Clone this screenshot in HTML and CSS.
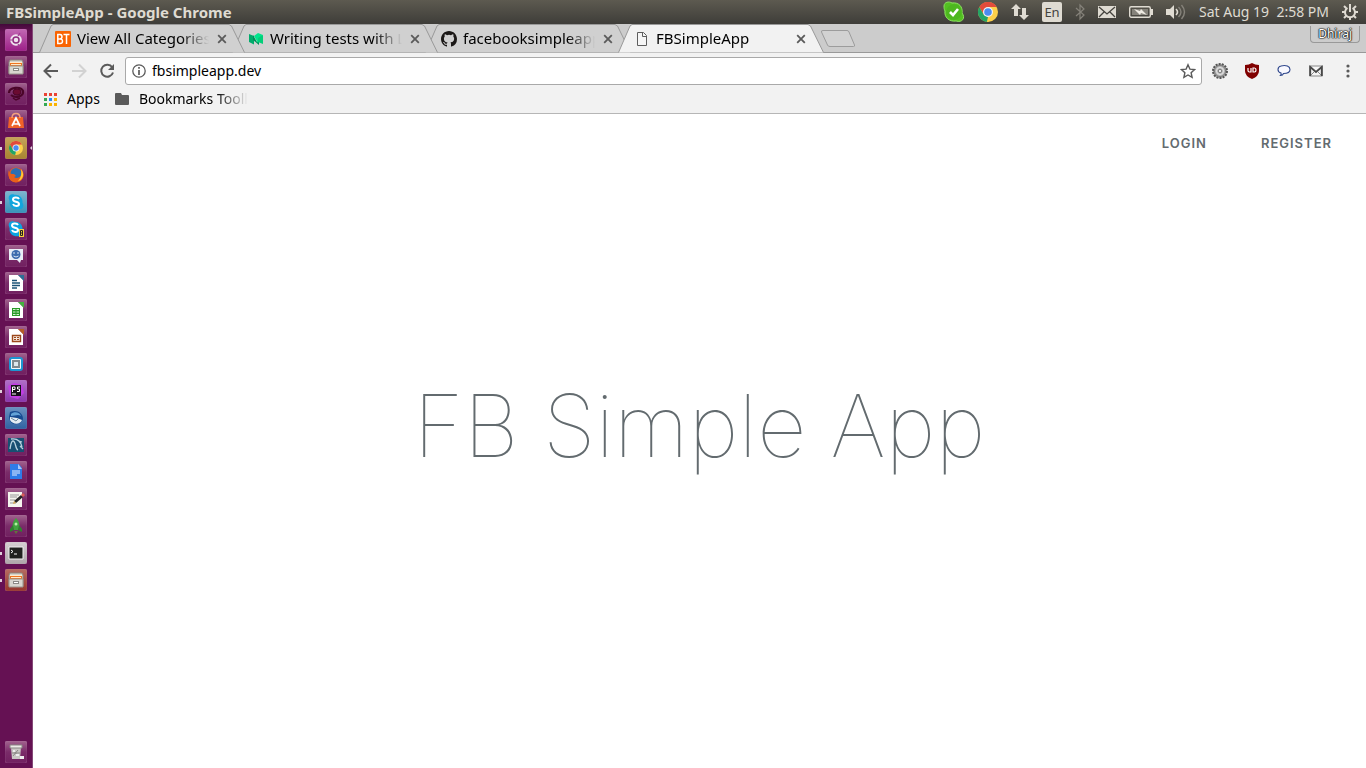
FILE: index.html
```html
<!DOCTYPE html>
<html lang="en">
<head>
<meta charset="utf-8">
<title>FBSimpleApp - Google Chrome</title>
<link rel="stylesheet" href="styles.css">
</head>
<body class="desktop">
<svg class="defs" aria-hidden="true">
  <defs>
    <symbol id="chrome" viewBox="0 0 20 20">
      <circle cx="10" cy="10" r="10" fill="#fdd04a"/>
      <path d="M10 10 5.7 12.5 1.3 5A10 10 0 0 1 18.7 5H10Z" fill="#e24b3c"/>
      <path d="M1.3 5 5.7 12.5 10 15 9.6 20A10 10 0 0 1 1.3 5Z" fill="#23a566"/>
      <path d="M10 15 14.3 12.5 10 20H9Z" fill="#fdd04a"/>
      <circle cx="10" cy="10" r="5" fill="#f4f4f4"/><circle cx="10" cy="10" r="3.8" fill="#4b8bf0"/>
    </symbol>
    <symbol id="close" viewBox="0 0 10 10"><path d="M1.2 1.2 8.8 8.8M8.8 1.2 1.2 8.8" stroke="#5a5a5a" stroke-width="1.8"/></symbol>
    <symbol id="cabinet" viewBox="0 0 22 22">
      <path d="M5 4h12l1 2v11H4V6Z" fill="#d5d2ca" stroke="#8c857c"/><path d="M5 6h12v4H5z" fill="#ef7420"/><path d="M5 6h12v1H5zM6 8h10v1H6z" fill="#ffe9c9"/>
      <path d="M4 10h14v8H4z" fill="#d8d6cf" stroke="#99948c"/><path d="M8 12h6v3H8z" fill="#8b8985"/><path d="M9 13h4v1H9z" fill="#fff"/>
    </symbol>
    <symbol id="skypeball" viewBox="0 0 20 20"><path d="M1 6C0 2 4-1 8 1c6-1 11 4 10 10 3 4 0 9-5 8C6 20 1 15 2 9Z"/></symbol>
    <symbol id="sheet" viewBox="0 0 22 22"><path d="M4 3h9l5 5v11H4Z" fill="#fff"/><path d="M13 3h6v6Z" fill="currentColor"/></symbol>
  </defs>
</svg>

<header class="panel">
  <strong class="panel-title">FBSimpleApp - Google Chrome</strong>
  <div class="tray">
    <button aria-label="Skype"><svg width="22" height="22" viewBox="0 0 22 22"><path d="M1 5C1 1 6 0 9 2c7-1 11 4 10 10 4 5 0 10-6 8C6 21 1 16 2 10 1 8 1 7 1 5Z" fill="#54c022" stroke="#8ce262"/><circle cx="11" cy="11" r="7.8" fill="#4db71f"/><path d="m7 11 3 3 5-6" fill="none" stroke="#fff" stroke-width="2.6"/></svg></button>
    <button aria-label="Chrome"><svg width="20" height="20"><use href="#chrome"/></svg></button>
    <button aria-label="Network"><svg width="18" height="18" viewBox="0 0 18 18" fill="#dfdbd2"><path d="M5 1 10 6H7v7H3V6H0ZM11 5h4v7h3l-5 5-5-5h3Z"/></svg></button>
    <button class="lang">En</button>
    <button aria-label="Bluetooth"><svg width="10" height="18" viewBox="0 0 10 18"><path d="m1 5 8 7-4 4V2l4 4-8 7" fill="none" stroke="#85827a" stroke-width="1.2"/></svg></button>
    <button aria-label="Messages"><svg width="18" height="12" viewBox="0 0 18 12"><path d="M0 0h18v12H0z" fill="#dfdbd2"/><path d="m1 1 8 7 8-7M1 11l5-5M17 11l-5-5" fill="none" stroke="#45433e" stroke-width="1.3"/></svg></button>
    <button aria-label="Battery"><svg width="24" height="14" viewBox="0 0 24 14"><rect x=".7" y="1.7" width="20.6" height="10.6" rx="1.5" fill="none" stroke="#dfdbd2" stroke-width="1.4"/><path d="M22 4h2v6h-2z" fill="#dfdbd2"/><path d="M3 4h16v6H3z" fill="#85827a"/><path d="m5 4 6 2 1-2 6 6-6-2-1 2Z" fill="#eeeae2"/></svg></button>
    <button aria-label="Sound"><svg width="20" height="16" viewBox="0 0 20 16" fill="none"><path d="M0 5h4l4-4v14l-4-4H0Z" fill="#dfdbd2"/><path d="M10 5q3 3 0 6" stroke="#dfdbd2" stroke-width="1.6"/><path d="M12.500 3q5 5 0 10M15.500 1q6 7 0 14" stroke="#85827a" stroke-width="1.4"/></svg></button>
    <button class="clock">Sat Aug 19&nbsp; 2:58 PM</button>
    <button aria-label="Session"><svg width="16" height="16" viewBox="0 0 16 16" fill="none" stroke="#dfdbd2"><path d="M5.500 4a5 5 0 1 0 5 0" stroke-width="2"/><path d="M8 0v8" stroke-width="2"/><path d="m2 2 2.300 2.300M14 2l-2.300 2.300M0 8h3M16 8h-3M2 14l2.300-2.300M14 14l-2.300-2.300M8 16v-3" stroke-width="2"/></svg></button>
  </div>
</header>

<div class="workspace">
  <nav class="launcher" aria-label="Launcher">
    <button class="tile ubuntu" aria-label="Dash"><svg viewBox="0 0 22 22"><circle cx="11" cy="11" r="5.800" fill="#efe3ee"/><circle cx="11" cy="11" r="3" fill="none" stroke="#8f2a7f" stroke-width="1.500"/><path d="M5 11h3M13 7l2-3M13 15l2 3" stroke="#a23b92" stroke-width="1.200"/></svg></button>
    <button class="tile" aria-label="Files"><svg viewBox="0 0 22 22"><use href="#cabinet"/></svg></button>
    <button class="tile" aria-label="Debian tool"><svg viewBox="0 0 22 22" fill="none" stroke="#4a0528"><path d="M4 10c0-6 12-7 14-2 1 5-7 8-12 4" stroke-width="2.200"/><ellipse cx="12" cy="9" rx="4" ry="3" fill="#6a0a30"/><path d="m8 15 3 2 4-2" stroke-width="1.500"/></svg></button>
    <button class="tile" aria-label="Software"><svg viewBox="0 0 22 22"><path d="M4 7h14l1 11H3Z" fill="#ef6228"/><path d="M7 8c0-6 8-6 8 0" fill="none" stroke="#f3a07c" stroke-width="1.500"/><path d="m7 16 4-8 4 8M7.500 14h7" fill="none" stroke="#fff" stroke-width="1.700"/></svg></button>
    <button class="tile gold running focused" aria-label="Google Chrome"><svg viewBox="0 0 22 22"><use href="#chrome" x="4" y="4" width="14" height="14"/></svg></button>
    <button class="tile" aria-label="Firefox"><svg viewBox="0 0 22 22"><circle cx="11" cy="11" r="7.500" fill="#e8601c"/><circle cx="11" cy="9.500" r="5.500" fill="#2b6fb5"/><path d="M4 6c0 4 2 4 5 4l2 2-2 1c2 2 6 1 7-2 1-3 0-5-1-7 4 3 5 9 1 12-4 4-11 2-12-3-1-3-1-5 0-7Z" fill="#e8601c"/><path d="M16 5c4 5 2 11-3 12 3-3 4-7 3-12Z" fill="#ffca38"/></svg></button>
    <button class="tile sky running" aria-label="Skype"><svg viewBox="0 0 22 22"><use href="#skypeball" x="3" y="3" width="16" height="16" fill="#12a5dd"/><path d="M14 8c-1-2-6-2-6 .500 0 3 6 1.500 6 4.500 0 2.500-5 2.500-6 0" fill="none" stroke="#fff" stroke-width="2"/></svg></button>
    <button class="tile" aria-label="Skype Beta"><svg viewBox="0 0 22 22"><use href="#skypeball" x="3" y="3" width="16" height="16" fill="#0aa4e2"/><path d="M13 7c-1-2-6-2-6 .500 0 3 6 1.500 6 4.500 0 2.500-5 2.500-6 0" fill="none" stroke="#fff" stroke-width="2"/><path d="M14 11h5v8h-5z" fill="#f9d23b"/><path d="M15.500 12.500h2v5h-2zM15.500 15h2" fill="none" stroke="#222"/></svg></button>
    <button class="tile" aria-label="Empathy"><svg viewBox="0 0 22 22"><path d="M4 4h14v11h-2l-1 3-3-3H4Z" fill="#e9eff8"/><circle cx="11" cy="9.500" r="4.500" fill="#3d6cae"/><path d="M9 7v2M13 7v2M8.500 11q2.500 2 5 0" fill="none" stroke="#dbe7f5"/></svg></button>
    <button class="tile blue-doc" aria-label="Writer"><svg viewBox="0 0 22 22"><use href="#sheet"/><path d="M7 8.500h5M7 11h8M7 13.500h8M7 16h5" stroke="#1b5377" stroke-width="1.300"/></svg></button>
    <button class="tile green-doc" aria-label="Calc"><svg viewBox="0 0 22 22"><use href="#sheet"/><path d="M7 9h8v8H7z" fill="#289b27"/><path d="M8 10.500h6M8 13h6M8 15.500h6" stroke="#d6f1d2" stroke-dasharray="2.500 1"/></svg></button>
    <button class="tile orange-doc" aria-label="Impress"><svg viewBox="0 0 22 22"><use href="#sheet"/><path d="M7.500 9.500h8v6h-8z" fill="#f7e9df" stroke="#9c481c" stroke-width="1.400"/><path d="M9 11.500h2M12 11.500h2M9 13.500h2M12 13.500h2" stroke="#9c481c"/></svg></button>
    <button class="tile" aria-label="Virtual machines"><svg viewBox="0 0 22 22"><rect x="5" y="5" width="12" height="12" rx="2" fill="#f2f7fa" stroke="#1c96d2" stroke-width="2"/><path d="M7 7h8v8H7z" fill="#7f898e"/><path d="M9 9h4v4H9z" fill="#dce7ec"/></svg></button>
    <button class="tile violet running" aria-label="PhpStorm"><svg viewBox="0 0 22 22"><path d="m3 6 6-3 8 2 2 8-6 6-8-2Z" fill="#c13ee3"/><path d="M6 5h10v11H6z" fill="#17111b"/><path d="M7.500 12V7h2.500v2.500H8M15 7h-2.500v2H14.500v2.500H12M7 14h4" fill="none" stroke="#fff"/></svg></button>
    <button class="tile navy running" aria-label="Thunderbird"><svg viewBox="0 0 22 22"><path d="M5 5c7-3 13 1 13 7-2 6-10 7-13 2l-1-4Z" fill="#174c91"/><path d="m5 10 7 1 5 2c-2 5-9 5-12 0Z" fill="#e4edf4"/><path d="M6 7c3-3 9-2 10 2-3-2-6 0-10 0Z" fill="#63a3d7"/><path d="m6 11 5 3 3-3" fill="none" stroke="#6f8b9f"/></svg></button>
    <button class="tile" aria-label="MySQL Workbench"><svg viewBox="0 0 22 22"><path d="M3 4h16v14H3z" fill="#174f72"/><path d="M5 15c1-5 1-8 3-8 3 0 2 8 5 9M6 5c7-1 10 3 11 8M14 7l3 1M15 12l3 3" fill="none" stroke="#b8d2df" stroke-width="1.300"/></svg></button>
    <button class="tile" aria-label="Docs"><svg viewBox="0 0 22 22"><path d="M5 3h9l3 4v11H5Z" fill="#2f7be8"/><path d="M13 3v5h4Z" fill="#a7c7fa"/><path d="M7 10h8M7 12h8M7 14h5" stroke="#e5efff"/></svg></button>
    <button class="tile" aria-label="Text Editor"><svg viewBox="0 0 22 22"><path d="M3 4h14v15H3z" fill="#f5f4ee"/><path d="M5 7h9M5 9h7M5 12h5M5 15h6" stroke="#999"/><path d="m9 13 7-6 2 2-7 6Z" fill="#262626"/><path d="m16 7 2-2 2 2-2 2Z" fill="#d85b58"/><path d="m8 16 1-3 2 2Z" fill="#d7a84d"/></svg></button>
    <button class="tile" aria-label="Rocket"><svg viewBox="0 0 22 22"><path d="M11 3c4 4 4 8 2 12H9C7 11 7 7 11 3Z" fill="#42a240"/><path d="m8 10-3 4v3l4-2M14 10l3 4v3l-4-2" fill="#2e842e"/><circle cx="11" cy="9" r="1.500" fill="#b5efa4"/><path d="M9 16h4l-2 3Z" fill="#60763c"/></svg></button>
    <button class="tile silver running" aria-label="Terminal"><svg viewBox="0 0 22 22"><path d="M4 5h14v12H4z" fill="#20211f" stroke="#f0f0f0"/><path d="m6 8 2 1.500L6 11M9 12h3" fill="none" stroke="#fff"/></svg></button>
    <button class="tile rust running" aria-label="Files window"><svg viewBox="0 0 22 22"><use href="#cabinet"/></svg></button>
    <button class="tile trash" aria-label="Trash"><svg viewBox="0 0 22 22"><path d="m6 6 1 12h8l1-12Z" fill="#c9c7c4"/><path d="M5 4h12v3H5z" fill="#ecebe7" stroke="#898683"/><path d="m8 9 5 6M13 9l-5 6M7 12h8" stroke="#8a8885"/><path d="M8 9h2v2H8zM11 13h3v2h-3zM15 15h4v3h-4z" fill="#eee"/></svg></button>
  </nav>

  <main class="browser">
    <div class="tabstrip">
      <div class="tab"><svg class="shape" viewBox="0 0 206 29"><path d="M.500 28.500 12 2 14 .500H190L192.500 2 205.500 28.500"/></svg>
        <svg class="favicon" viewBox="0 0 16 16"><rect width="16" height="16" rx="1" fill="#f96302"/><path d="M2.800 3.500v9H5q2.500 0 2.500-2.300T5 8q2-.300 2-2.300T5 3.500ZM2.800 8H5M8.500 3.500h6M11.500 3.500v9.500" fill="none" stroke="#fff" stroke-width="1.500"/></svg>
        <span class="tab-title">View All Categories</span><button aria-label="Close tab"><svg width="10" height="10"><use href="#close"/></svg></button></div>
      <div class="tab"><svg class="shape" viewBox="0 0 206 29"><path d="M.500 28.500 12 2 14 .500H190L192.500 2 205.500 28.500"/></svg>
        <svg class="favicon" viewBox="0 0 16 16"><path d="m1 3 5 2v8.500L1 11Z" fill="#00ab6b"/><path d="m5 4 4 7 2-1v4L5 9Z" fill="#00905a"/><path d="m10 2 5 2-5 8-4-7Z" fill="#00e58c"/><path d="m10 7 5-3v9l-5-2Z" fill="#02cf79"/></svg>
        <span class="tab-title">Writing tests with L</span><button aria-label="Close tab"><svg width="10" height="10"><use href="#close"/></svg></button></div>
      <div class="tab"><svg class="shape" viewBox="0 0 206 29"><path d="M.500 28.500 12 2 14 .500H190L192.500 2 205.500 28.500"/></svg>
        <svg class="favicon" viewBox="0 0 16 16"><path fill="#1b1817" d="M8 0C3.580 0 0 3.580 0 8c0 3.540 2.290 6.530 5.470 7.590.4.070.55-.170.55-.380 0-.190-.010-.820-.010-1.490-2.010.370-2.530-.490-2.690-.940-.090-.230-.480-.940-.820-1.130-.280-.150-.680-.520-.010-.530.630-.010 1.080.580 1.230.820.720 1.210 1.870.870 2.330.660.070-.520.280-.870.510-1.070-1.780-.200-3.640-.890-3.640-3.950 0-.870.310-1.590.820-2.150-.080-.200-.360-1.020.080-2.120 0 0 .670-.210 2.200.820a7.600 7.600 0 0 1 4 0c1.530-1.040 2.200-.820 2.200-.820.440 1.100.160 1.920.080 2.120.510.560.820 1.270.820 2.150 0 3.070-1.870 3.750-3.650 3.950.290.250.540.730.540 1.480 0 1.070-.010 1.930-.010 2.200 0 .210.150.460.550.380A8 8 0 0 0 16 8c0-4.420-3.580-8-8-8Z"/></svg>
        <span class="tab-title">facebooksimpleapp</span><button aria-label="Close tab"><svg width="10" height="10"><use href="#close"/></svg></button></div>
      <div class="tab active"><svg class="shape" viewBox="0 0 206 29"><path d="M.500 28.500 12 2 14 .500H190L192.500 2 205.500 28.500"/></svg>
        <svg class="favicon" viewBox="0 0 16 16"><path d="M3.500 1.500h6l3 3v10h-9Z" fill="#f6f6f6" stroke="#5e5e5e"/><path d="M8.500 1.500v4h4" fill="none" stroke="#5e5e5e"/></svg>
        <span class="tab-title">FBSimpleApp</span><button aria-label="Close tab"><svg width="10" height="10"><use href="#close"/></svg></button></div>
      <button class="new-tab" aria-label="New tab"><svg width="36" height="18" viewBox="0 0 36 18"><path d="M3 .500h24q1.500 0 2 1.500l5.500 13q.500 1.500-1 1.500H10q-2 0-2.500-1.500L1.500 2Q1 .500 3 .500Z" fill="#d2d2d2" stroke="#9c9c9c"/></svg></button>
      <button class="profile">Dhiraj</button>
    </div>

    <div class="toolbar">
      <div class="nav-buttons">
        <button aria-label="Back"><svg width="16" height="16" viewBox="0 0 16 16" fill="none" stroke="#5a5a5a" stroke-width="2"><path d="M15 8H2M8 1.500 1.500 8 8 14.500"/></svg></button>
        <button aria-label="Forward"><svg width="16" height="16" viewBox="0 0 16 16" fill="none" stroke="#d2d2d2" stroke-width="2"><path d="M1 8h13M8 1.500 14.500 8 8 14.500"/></svg></button>
        <button aria-label="Reload"><svg width="16" height="16" viewBox="0 0 16 16"><path d="M13.200 4.300A6 6 0 1 0 14 9.500" fill="none" stroke="#5a5a5a" stroke-width="2"/><path d="M15 1v6H9Z" fill="#5a5a5a"/></svg></button>
      </div>
      <div class="omnibox">
        <svg width="14" height="14" viewBox="0 0 14 14"><circle cx="7" cy="7" r="6.200" fill="none" stroke="#5a5a5a" stroke-width="1.300"/><path d="M7 6v5M7 3v1.800" stroke="#5a5a5a" stroke-width="1.700"/></svg>
        <input type="text" value="fbsimpleapp.dev" aria-label="Address">
        <button aria-label="Bookmark this page"><svg width="16" height="16" viewBox="0 0 16 16"><path d="m8 1.800 1.900 4.300 4.700.5-3.500 3.100 1 4.700L8 12l-4.100 2.400 1-4.700-3.500-3.100 4.700-.5Z" fill="none" stroke="#5a5a5a" stroke-width="1.400"/></svg></button>
      </div>
      <div class="extensions">
        <button aria-label="Settings extension"><svg width="16" height="16" viewBox="0 0 16 16"><circle cx="8" cy="8" r="7" fill="#aaa" stroke="#555" stroke-width="2" stroke-dasharray="2 1.140"/><circle cx="8" cy="8" r="5.500" fill="#bdbdbd" stroke="#777"/><circle cx="8" cy="8" r="3.500" fill="none" stroke="#e5e5e5"/><circle cx="8" cy="8" r="1.800" fill="#e9e9e9" stroke="#777"/></svg></button>
        <button aria-label="uBlock Origin"><svg width="16" height="16" viewBox="0 0 16 16"><path d="M8 0q3 2 7 2v6q0 5-7 8-7-3-7-8V2q4 0 7-2Z" fill="#800000"/><path d="M4 5v2.500Q4 9 5.500 9H7V5M9 5h1.500Q12 5 12 7t-1.500 2H9Z" fill="none" stroke="#fff" stroke-width="1.200"/></svg></button>
        <button aria-label="Chat"><svg width="16" height="16" viewBox="0 0 16 16"><path d="M5 10C1 9 1 4 5 3c5-1.500 9 .500 9 3.500S11 10.500 7.500 10.500C7 12 6 12.500 4.500 12.500Q5.500 11.500 5 10Z" fill="#f8f8ff" stroke="#31498d" stroke-width="1.100"/></svg></button>
        <button aria-label="Mail"><svg width="16" height="16" viewBox="0 0 16 16"><path d="M1.500 3h13v10h-13z" fill="#f5f5f5" stroke="#888"/><path d="M2.300 13V4L8 9l5.700-5v9" fill="none" stroke="#484848" stroke-width="1.700"/><path d="m3 12 3-3M13 12l-3-3" stroke="#888"/></svg></button>
        <button aria-label="Menu"><svg width="16" height="16" viewBox="0 0 16 16" fill="#5a5a5a"><circle cx="8" cy="3" r="1.600"/><circle cx="8" cy="8" r="1.600"/><circle cx="8" cy="13" r="1.600"/></svg></button>
      </div>
    </div>

    <div class="bookmarks">
      <button><svg width="13" height="13" viewBox="0 0 13 13"><path d="M0 0h3v3H0zM5 0h3v3H5zM10 0h3v3h-3z" fill="#ea4335"/><path d="M0 5h3v3H0zM0 10h3v3H0z" fill="#34a853"/><path d="M5 5h3v3H5z" fill="#2a8af3"/><path d="M10 5h3v3h-3zM10 10h3v3h-3zM5 10h3v3H5z" fill="#fbb300"/></svg>Apps</button>
      <button><svg width="14" height="12" viewBox="0 0 14 12"><path d="M1 0h5l1 2h6q1 0 1 1v8q0 1-1 1H1q-1 0-1-1V1q0-1 1-1Z" fill="#5a5a5a"/></svg><span class="folder-name">Bookmarks Tooll</span></button>
    </div>

    <section class="page">
      <nav class="links"><a href="#login">Login</a><a href="#register">Register</a></nav>
      <h1 class="title">FB Simple App</h1>
    </section>
  </main>
</div>
</body>
</html>
```
FILE: styles.css
```css
* { box-sizing: border-box; }
.desktop {
  margin: 0;
  height: 100vh;
  display: flex;
  flex-direction: column;
  overflow: hidden;
  font: 14px/20px "Noto Sans", sans-serif;
  color: #000;
}
.defs { position: absolute; width: 0; height: 0; }
svg { display: block; flex: none; }
button {
  display: flex;
  align-items: center;
  justify-content: center;
  padding: 0;
  border: 0;
  background: none;
  font: inherit;
  color: inherit;
}

/* Top panel */
.panel {
  flex: none;
  height: 24px;
  display: flex;
  align-items: center;
  justify-content: space-between;
  padding: 0 8px 0 6px;
  background: linear-gradient(#5d5a50, #3e3d39);
  color: #dfdbd2;
}
.panel-title { font-size: 15px; }
.tray { display: flex; align-items: center; gap: 13px; }
.lang {
  width: 20px;
  height: 20px;
  border-radius: 2px;
  background: #dfdbd2;
  color: #45433e;
  font-size: 13px;
}

/* Launcher */
.workspace { flex: 1; min-height: 0; display: flex; }
.launcher {
  flex: none;
  width: 33px;
  display: flex;
  flex-direction: column;
  align-items: center;
  gap: 5px;
  padding: 5px 1px 5px 0;
  background: linear-gradient(#43093a, #651153 8px);
  border-right: 1px solid #844877;
}
.tile {
  position: relative;
  flex: none;
  width: 22px;
  height: 22px;
  border-radius: 2px;
  background: linear-gradient(#a2648f, #7a2c69 50%, #712060);
  box-shadow: inset 0 0 1px #c08bb3;
}
.tile svg { width: 22px; height: 22px; }
.ubuntu { background: linear-gradient(#c269b4, #9c1f87); }
.gold { background: linear-gradient(#c5a35a, #a88430); }
.sky { background: linear-gradient(#7fb6cf, #3793b9); }
.violet { background: linear-gradient(#b26fc9, #8a36ac); }
.navy { background: linear-gradient(#6b92c0, #2f62a2); }
.silver { background: linear-gradient(#d6d0d3, #aea6aa); }
.rust { background: linear-gradient(#b56c62, #96362c); }
.blue-doc { color: #2b6f96; }
.green-doc { color: #43b23f; }
.orange-doc { color: #b55c25; }
.trash { margin-top: auto; }
.running::before {
  content: "";
  position: absolute;
  left: -5px;
  top: 10px;
  width: 2px;
  height: 3px;
  background: #ded0db;
}
.focused::after {
  content: "";
  position: absolute;
  right: -5px;
  top: 9px;
  border: 2px solid transparent;
  border-right-color: #ded0db;
  border-left: 0;
}

/* Browser */
.browser { flex: 1; min-width: 0; display: flex; flex-direction: column; }
.tabstrip {
  flex: none;
  height: 29px;
  display: flex;
  padding: 0 6px;
  background: #ccc;
  box-shadow: inset 0 -1px #999;
}
.tab {
  position: relative;
  flex: none;
  width: 206px;
  margin-right: -13px;
  display: flex;
  align-items: center;
  gap: 6px;
  padding: 0 16px;
}
.tab:nth-child(1) { z-index: 3; }
.tab:nth-child(2) { z-index: 2; }
.tab:nth-child(3) { z-index: 1; }
.tab.active { z-index: 4; }
.shape {
  position: absolute;
  inset: 0;
  z-index: -1;
  fill: #d0d0d0;
  stroke: #999;
}
.active .shape { fill: #f2f2f2; }
.favicon { width: 16px; height: 16px; }
.tab-title {
  flex: 1;
  min-width: 0;
  margin-right: -8px;
  padding-bottom: 2px;
  overflow: hidden;
  white-space: nowrap;
  font-size: 15px;
  mask-image: linear-gradient(to left, transparent 8px, #000 36px);
}
.tab button { margin: 0 2px; }
.new-tab { position: relative; margin-left: 9px; }
.profile {
  margin: 2px 0 0 auto;
  height: 17px;
  padding: 0 7px;
  border: 1px solid #999;
  border-top: 0;
  border-radius: 0 0 4px 4px;
  color: #fff;
  font-size: 12px;
  text-shadow: 0 0 1px #000, 0 0 1px #000, 0 0 1px #000, 0 0 2px #000;
}
.toolbar {
  flex: none;
  height: 36px;
  display: flex;
  align-items: center;
  gap: 10px;
  padding: 0 10px;
  background: #f2f2f2;
}
.nav-buttons { display: flex; gap: 12px; }
.omnibox {
  flex: 1;
  height: 28px;
  display: flex;
  align-items: center;
  gap: 6px;
  padding: 0 5px 0 6px;
  border: 1px solid #a9a9a9;
  border-radius: 3px;
  background: #fff;
}
.omnibox input {
  flex: 1;
  min-width: 0;
  padding: 0;
  border: 0;
  outline: 0;
  background: none;
  font: inherit;
}
.extensions { display: flex; gap: 16px; }
.bookmarks {
  flex: none;
  height: 25px;
  display: flex;
  align-items: flex-start;
  gap: 15px;
  padding: 0 11px;
  background: #f2f2f2;
  border-bottom: 1px solid #b6b6b6;
}
.bookmarks button { gap: 10px; }
.folder-name {
  overflow: hidden;
  white-space: nowrap;
  mask-image: linear-gradient(to left, transparent, #000 32px);
}

/* Page */
.page {
  flex: 1;
  min-height: 0;
  display: flex;
  flex-direction: column;
  background: #fff;
  color: #636b6f;
}
.links {
  display: flex;
  justify-content: flex-end;
  gap: 54px;
  padding: 19px 34px 0;
}
.links a {
  color: inherit;
  font-family: Inter, sans-serif;
  font-size: 13px;
  font-weight: 600;
  letter-spacing: 1px;
  text-decoration: none;
  text-transform: uppercase;
}
.title {
  flex: 1;
  display: flex;
  align-items: center;
  justify-content: center;
  margin: 0;
  padding-bottom: 70px;
  font: 100 86px/100px Inter, sans-serif;
}
```
